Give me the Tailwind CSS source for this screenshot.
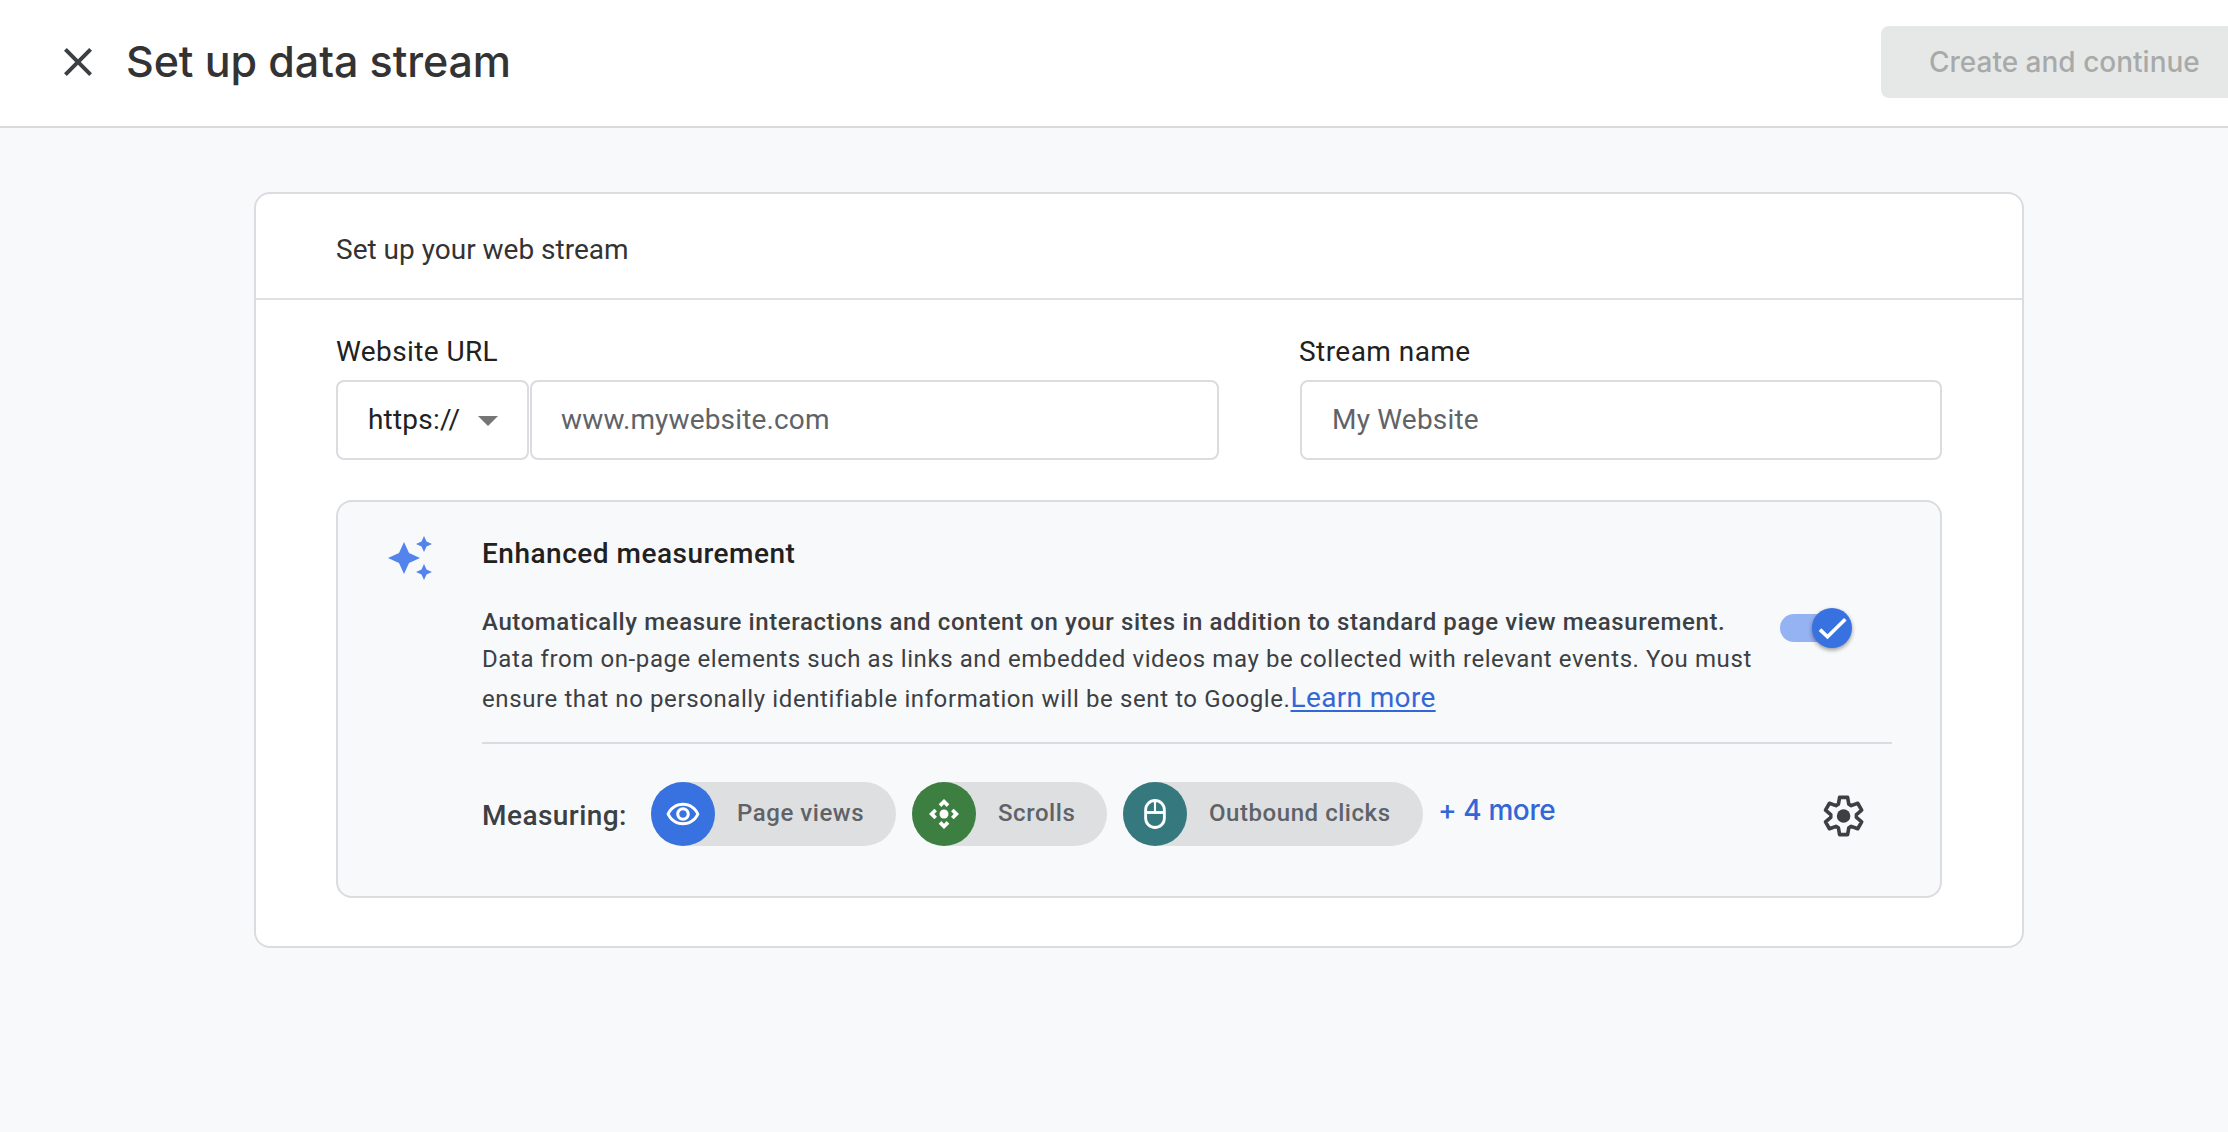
<!DOCTYPE html>
<html lang="en">
<head>
    <meta charset="UTF-8">
    <meta name="viewport" content="width=device-width, initial-scale=1.0">
    <title>Set up data stream</title>
    <script src="https://cdn.jsdelivr.net/npm/@tailwindcss/browser@4"></script>
</head>
<body class="min-h-screen bg-[#f8f9fb] overflow-hidden font-['Roboto',sans-serif]">
    <!-- Header -->
    <header class="flex items-center h-32 pb-0.5 bg-white border-b-2 border-[#dadada]">
        <button class="ml-[54px]" aria-label="Close">
            <svg class="w-12 h-12 fill-[#3c4043]" viewBox="0 0 24 24">
                <path d="M19 6.41L17.59 5 12 10.59 6.41 5 5 6.41 10.59 12 5 17.59 6.41 19 12 13.41 17.59 19 19 17.59 13.41 12z"/>
            </svg>
        </button>
        <h1 class="ml-6 pb-0.5 font-['Inter',sans-serif] font-medium text-[43px] tracking-[-0.1px] text-[#333333]">Set up data stream</h1>
        <button class="ml-auto w-[347px] h-[72px] pl-12 text-left whitespace-nowrap rounded-l-lg bg-[#e6e8e7] font-['Inter',sans-serif] font-medium text-[28px] text-[#a8aaa9]" disabled>Create and continue</button>
    </header>

    <!-- Web stream card -->
    <main class="mt-16 ml-[254px] w-[1770px] bg-white border-2 border-[#dadce0] rounded-2xl">
        <h2 class="flex items-center h-[106px] pl-20 pt-[7px] border-b-2 border-[#dfe0e1] text-[28px] text-[#333333]">Set up your web stream</h2>

        <div class="px-20 pt-8 pb-12">
            <div class="flex gap-[81px] text-[28px]">
                <div class="w-[883px]">
                    <p class="leading-[39px] mb-[9px] tracking-[0.4px] text-[#212121]">Website URL</p>
                    <div class="flex gap-px">
                        <div class="flex items-center justify-between w-[192.5px] h-20 pl-[30px] pr-[29px] border-2 border-[#dadce0] rounded-lg tracking-[0.2px] text-[#212121]">
                            https://
                            <svg class="w-5 h-2.5 mt-0.5 fill-[#757575]" viewBox="0 0 20 10"><path d="M0 0h20L10 10z"/></svg>
                        </div>
                        <div class="flex items-center flex-1 h-20 px-[29.5px] border-2 border-[#dadce0] rounded-lg tracking-[0.15px] text-[#5f6368]">www.mywebsite.com</div>
                    </div>
                </div>
                <div class="w-[642px]">
                    <p class="leading-[39px] mb-[9px] -ml-px tracking-[0.45px] text-[#212121]">Stream name</p>
                    <div class="flex items-center h-20 px-[30px] border-2 border-[#dadce0] rounded-lg tracking-[0.2px] text-[#5f6368]">My Website</div>
                </div>
            </div>

            <!-- Enhanced measurement -->
            <section class="flex mt-10 h-[398px] pt-8 bg-[#f8f9fb] border-2 border-[#dadce0] rounded-2xl">
                <div class="w-36 pl-12 shrink-0">
                    <svg class="w-12 h-12 fill-[#5384ed]" viewBox="0 0 24 24">
                        <path d="M19 9l1.25-2.75L23 5l-2.75-1.25L19 1l-1.25 2.75L15 5l2.75 1.25L19 9zm-7.5.5L9 4 6.5 9.5 1 12l5.5 2.5L9 20l2.5-5.5L17 12l-5.5-2.5zM19 15l-1.25 2.75L15 19l2.75 1.25L19 23l1.25-2.75L23 19l-2.75-1.25L19 15z"/>
                    </svg>
                </div>
                <div class="w-[1410px]">
                    <h3 class="leading-[39px] font-medium text-[28px] tracking-[0.5px] text-[#212121]">Enhanced measurement</h3>

                    <div class="flex justify-between mt-[30px] pr-10">
                        <div class="pt-px text-2xl tracking-[0.6px] whitespace-nowrap text-[#3c4043]">
                            <p class="h-[37px] leading-[37px] font-medium">Automatically measure interactions and content on your sites in addition to standard page view measurement.</p>
                            <p class="h-[37px] leading-[37px] tracking-[0.59px]">Data from on-page elements such as links and embedded videos may be collected with relevant events. You must</p>
                            <p class="h-[42px] leading-[39px]">ensure that no personally identifiable information will be sent to Google.<a href="#" class="text-[28px] tracking-[0.35px] underline decoration-2 underline-offset-[3px] text-[#3367d6]">Learn more</a></p>
                        </div>
                        <div class="flex items-center justify-end w-[72px] h-10 mt-[5px] shrink-0">
                            <div class="w-14 h-7 -mr-6 rounded-l-full bg-[#95b2f3]"></div>
                            <div class="w-10 h-10 rounded-full bg-[#3871e0] shadow-[0_2px_4px_rgba(0,0,0,0.4)]">
                                <svg class="w-10 h-10 fill-none stroke-white stroke-[3.6]" viewBox="0 0 40 40"><path d="M8 21.6l7.5 7.1L33.3 11.2"/></svg>
                            </div>
                        </div>
                    </div>

                    <div class="mt-[22px] h-0.5 bg-[#dadce0]"></div>

                    <!-- Measured events -->
                    <div class="flex items-center mt-[38px] h-16 font-medium text-2xl tracking-[0.55px] whitespace-nowrap text-[#5f6368]">
                        <span class="w-[169px] pt-1 text-[28px] tracking-[0.45px] text-[#3c4043]">Measuring:</span>
                        <div class="flex gap-4">
                            <div class="flex items-center w-[245px] h-16 rounded-full bg-[#dedfe1]">
                                <span class="flex items-center justify-center w-16 h-16 mr-[22px] rounded-full bg-[#3871e0]">
                                    <svg class="w-9 h-9 fill-white" viewBox="0 -0.5 24 24">
                                        <path d="M12 6c3.79 0 7.17 2.13 8.82 5.5C19.17 14.87 15.79 17 12 17s-7.17-2.13-8.82-5.5C4.83 8.13 8.21 6 12 6m0-2C7 4 2.73 7.11 1 11.5 2.73 15.89 7 19 12 19s9.27-3.11 11-7.5C21.27 7.11 17 4 12 4zm0 5c1.38 0 2.5 1.12 2.5 2.5S13.38 14 12 14s-2.5-1.12-2.5-2.5S10.62 9 12 9m0-2c-2.48 0-4.5 2.02-4.5 4.5S9.52 16 12 16s4.5-2.02 4.5-4.5S14.48 7 12 7z"/>
                                    </svg>
                                </span>
                                <span class="pb-0.5">Page views</span>
                            </div>
                            <div class="flex items-center w-[195px] h-16 rounded-full bg-[#dedfe1]">
                                <span class="flex items-center justify-center w-16 h-16 mr-[22px] rounded-full bg-[#3c7f40]">
                                    <svg class="w-9 h-9 fill-white" viewBox="0 0 24 24">
                                        <path d="M15.54 5.54L13.77 7.3 12 5.54 10.23 7.3 8.46 5.54 12 2zm2.92 10l-1.76-1.77L18.46 12l-1.76-1.77 1.76-1.77L22 12zm-10 2.92l1.77-1.76L12 18.46l1.77-1.76 1.77 1.76L12 22zm-2.92-10l1.76 1.77L5.54 12l1.76 1.77-1.76 1.77L2 12z"/>
                                        <circle cx="12" cy="12" r="3"/>
                                    </svg>
                                </span>
                                <span class="pb-0.5">Scrolls</span>
                            </div>
                            <div class="flex items-center w-[300px] h-16 rounded-full bg-[#dedfe1]">
                                <span class="flex items-center justify-center w-16 h-16 mr-[22px] rounded-full bg-[#35797f]">
                                    <svg class="w-9 h-9 fill-none stroke-white stroke-[1.9]" viewBox="0 0 24 24">
                                        <rect x="5.75" y="3" width="12.5" height="18" rx="6.25"/>
                                        <path d="M5.75 11h12.5"/>
                                        <path class="stroke-[1.4]" d="M12 3v8"/>
                                    </svg>
                                </span>
                                <span class="pb-0.5">Outbound clicks</span>
                            </div>
                        </div>
                        <a href="#" class="ml-[15px] pb-[7px] font-['Inter',sans-serif] text-[28px] tracking-[-0.4px] text-[#3367d6]">+ 4 more</a>
                        <button class="ml-auto mr-6 mt-1" aria-label="Settings">
                            <svg class="w-12 h-12 fill-none stroke-[#3c4043] stroke-[1.8]" viewBox="-11.8 -12 24 24" stroke-linejoin="round">
                                <path d="M-2-9.3L2-9.3 2.6-5.9 3.81-5.2 7.06-6.38 9.05-2.92 6.41-.7 6.41.7 9.05 2.92 7.06 6.38 3.81 5.2 2.6 5.9 2 9.3-2 9.3-2.6 5.9-3.81 5.2-7.06 6.38-9.05 2.92-6.41.7-6.41-.7-9.05-2.92-7.06-6.38-3.81-5.2-2.6-5.9z"/>
                                <circle class="fill-[#3c4043] stroke-none" r="3.4"/>
                            </svg>
                        </button>
                    </div>
                </div>
            </section>
        </div>
    </main>
</body>
</html>
